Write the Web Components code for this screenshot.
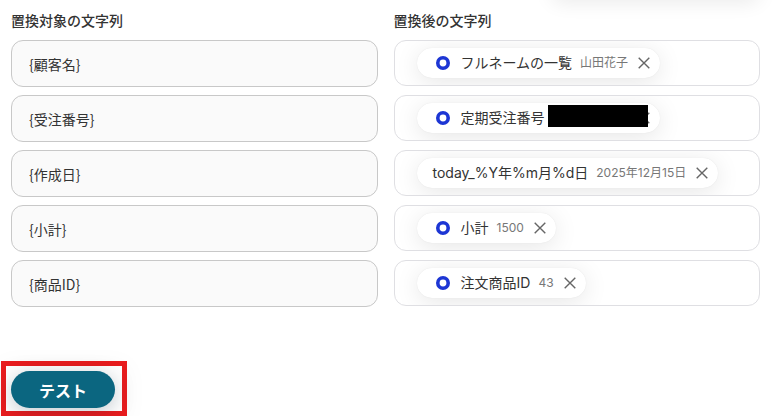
<!DOCTYPE html>
<html lang="ja">
<head>
<meta charset="utf-8">
<title>文字列の置換</title>
<style>
body { margin: 0; background: #fff; color: #333; font-family: "Noto Sans CJK JP", sans-serif; font-size: 14px; line-height: 20px; }
</style>
</head>
<body>
<replace-form>
  <replace-row source="{顧客名}"><value-chip icon note="山田花子">フルネームの一覧</value-chip></replace-row>
  <replace-row source="{受注番号}"><value-chip icon redacted>定期受注番号</value-chip></replace-row>
  <replace-row source="{作成日}"><value-chip note="2025年12月15日">today_%Y年%m月%d日</value-chip></replace-row>
  <replace-row source="{小計}"><value-chip icon note="1500">小計</value-chip></replace-row>
  <replace-row source="{商品ID}"><value-chip icon note="43">注文商品ID</value-chip></replace-row>
  <test-button slot="action">テスト</test-button>
</replace-form>

<template id="form-template">
  <style>
    :host { display: block; position: relative; overflow: hidden; padding: 10px 15px 0 11px; }
    .panel-edge { position: absolute; top: -20px; right: 15px; width: 27%; height: 20px; border-radius: 12px; box-shadow: 0 2px 20px rgba(0,0,0,.09); }
    .heads { display: grid; grid-template-columns: 1fr 1fr; gap: 16px; font-weight: 500; margin-bottom: 10px; }
    .rows { display: flex; flex-direction: column; gap: 8px; }
    .action { display: flex; margin: 54px 0 0 -10px; }
  </style>
  <div class="panel-edge"></div>
  <div class="heads"><span>置換対象の文字列</span><span>置換後の文字列</span></div>
  <div class="rows"><slot></slot></div>
  <div class="action"><slot name="action"></slot></div>
</template>

<template id="row-template">
  <style>
    :host { display: grid; grid-template-columns: minmax(0,1fr) minmax(0,1fr); gap: 16px; align-items: start; }
    input { box-sizing: border-box; width: 100%; height: 47px; margin: 0; padding: 0 17px; border: 1px solid #c8c8c8; border-radius: 12px; background: #fafafa; color: #333; font: inherit; outline: 0; }
    .target { box-sizing: border-box; display: flex; align-items: center; height: 46px; padding: 0 22px; border: 1px solid #dfdfe3; border-radius: 12px; overflow: hidden; }
  </style>
  <input type="text" aria-label="置換対象の文字列" readonly>
  <div class="target"><slot></slot></div>
</template>

<template id="chip-template">
  <style>
    :host { display: inline-flex; position: relative; align-items: center; box-sizing: border-box; height: 30px; padding: 0 8px 0 16px; border-radius: 15px; background: #fff; box-shadow: 0 0 1px rgba(0,0,0,.1), 0 4px 24px rgba(0,0,0,.1); font-family: Inter, "Noto Sans CJK JP", sans-serif; white-space: nowrap; }
    .ring { display: none; width: 20px; height: 20px; margin-right: 8px; }
    :host([icon]) .ring { display: block; }
    .note { margin-left: 8px; color: #777; font-size: 12px; }
    :host([redacted]) .note { width: 75px; }
    .mask { display: none; position: absolute; right: 12px; top: 2px; width: 100px; height: 22px; background: #000; }
    :host([redacted]) .mask { display: block; }
    button { display: flex; margin: 0 0 0 8px; padding: 0; border: 0; background: none; }
  </style>
  <svg class="ring" viewBox="0 0 20 20" aria-hidden="true"><circle cx="10" cy="10" r="5.2" fill="none" stroke="#1d36d4" stroke-width="3.6"/></svg>
  <span><slot></slot></span>
  <span class="note"></span>
  <button type="button" aria-label="削除"><svg width="16" height="16" viewBox="0 0 16 16" aria-hidden="true"><path d="M2.7 2.7 13.3 13.3M13.3 2.7 2.7 13.3" fill="none" stroke="#666" stroke-width="1.4"/></svg></button>
  <span class="mask"></span>
</template>

<template id="button-template">
  <style>
    :host { display: inline-flex; padding: 5px 7px 3px 5px; border: 5px solid #e81c1e; box-shadow: 0 4px 24px rgba(0,0,0,.04); }
    button { height: 37px; margin: 0; padding: 0 28px; border: 0; border-radius: 19px; background: #0b6680; color: #fff; font: 700 16px/24px "Noto Sans CJK JP", sans-serif; box-shadow: 0 4px 20px rgba(11,40,60,.25); }
  </style>
  <button type="button"><slot></slot></button>
</template>

<script>
class TemplateElement extends HTMLElement {
  constructor() {
    super();
    const template = document.getElementById(this.constructor.template);
    this.attachShadow({ mode: "open" }).append(template.content.cloneNode(true));
  }
}
class ReplaceForm extends TemplateElement { static template = "form-template"; }
class ReplaceRow extends TemplateElement {
  static template = "row-template";
  connectedCallback() { this.shadowRoot.querySelector("input").value = this.getAttribute("source"); }
}
class ValueChip extends TemplateElement {
  static template = "chip-template";
  connectedCallback() { this.shadowRoot.querySelector(".note").textContent = this.getAttribute("note") || ""; }
}
class TestButton extends TemplateElement { static template = "button-template"; }
customElements.define("replace-form", ReplaceForm);
customElements.define("replace-row", ReplaceRow);
customElements.define("value-chip", ValueChip);
customElements.define("test-button", TestButton);
</script>
</body>
</html>
